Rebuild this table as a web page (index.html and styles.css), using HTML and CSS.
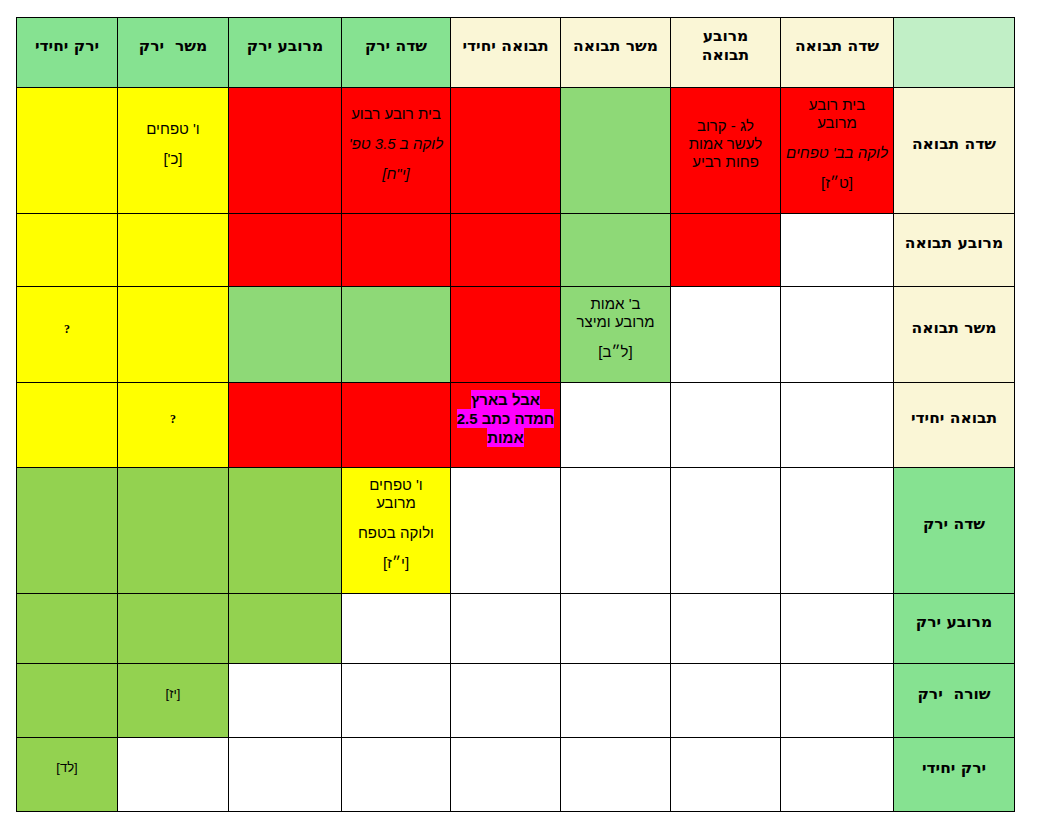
FILE: index.html
```html
<!DOCTYPE html>
<html lang="he">
<head>
<meta charset="utf-8">
<title>כלאים – טבלה</title>
<link rel="stylesheet" href="styles.css">
</head>
<body>
<table class="grid" dir="rtl">
  <colgroup>
    <col class="c-head"><col class="c1"><col class="c2"><col class="c3"><col class="c4"><col class="c5"><col class="c6"><col class="c7"><col class="c8">
  </colgroup>
  <thead>
    <tr class="r0">
      <th class="corner"></th>
      <th class="cream">שדה תבואה</th>
      <th class="cream">מרובע<br>תבואה</th>
      <th class="cream">משר תבואה</th>
      <th class="cream">תבואה יחידי</th>
      <th class="hgreen">שדה ירק</th>
      <th class="hgreen">מרובע ירק</th>
      <th class="hgreen">משר&nbsp; ירק</th>
      <th class="hgreen">ירק יחידי</th>
    </tr>
  </thead>
  <tbody>
    <tr class="r1">
      <th class="cream">שדה תבואה</th>
      <td class="red"><p>בית רובע<br>מרובע</p><p><i>לוקה בב' טפחים</i></p><p>[ט״ז]</p></td>
      <td class="red"><p>לג - קרוב<br>לעשר אמות<br>פחות רביע</p></td>
      <td class="lgreen"></td>
      <td class="red"></td>
      <td class="red"><p>בית רובע רבוע</p><p><i>לוקה ב 3.5 טפ'</i></p><p><i>[י"ח]</i></p></td>
      <td class="red"></td>
      <td class="yellow"><p>ו' טפחים</p><p>[כ']</p></td>
      <td class="yellow"></td>
    </tr>
    <tr class="r2">
      <th class="cream">מרובע תבואה</th>
      <td class="white"></td>
      <td class="red"></td>
      <td class="lgreen"></td>
      <td class="red"></td>
      <td class="red"></td>
      <td class="red"></td>
      <td class="yellow"></td>
      <td class="yellow"></td>
    </tr>
    <tr class="r3">
      <th class="cream">משר תבואה</th>
      <td class="white"></td>
      <td class="white"></td>
      <td class="lgreen"><p>ב' אמות<br>מרובע ומיצר</p><p>[ל״ב]</p></td>
      <td class="red"></td>
      <td class="lgreen"></td>
      <td class="lgreen"></td>
      <td class="yellow"></td>
      <td class="yellow"><span class="q">?</span></td>
    </tr>
    <tr class="r4">
      <th class="cream">תבואה יחידי</th>
      <td class="white"></td>
      <td class="white"></td>
      <td class="white"></td>
      <td class="red"><p class="note"><span class="mark">אבל בארץ</span><br><span class="mark">חמדה כתב 2.5</span><br><span class="mark">אמות</span></p></td>
      <td class="red"></td>
      <td class="red"></td>
      <td class="yellow"><span class="q">?</span></td>
      <td class="yellow"></td>
    </tr>
    <tr class="r5">
      <th class="hgreen">שדה ירק</th>
      <td class="white"></td>
      <td class="white"></td>
      <td class="white"></td>
      <td class="white"></td>
      <td class="yellow"><p>ו' טפחים<br>מרובע</p><p>ולוקה בטפח</p><p>[י״ז]</p></td>
      <td class="dgreen"></td>
      <td class="dgreen"></td>
      <td class="dgreen"></td>
    </tr>
    <tr class="r6">
      <th class="hgreen">מרובע ירק</th>
      <td class="white"></td>
      <td class="white"></td>
      <td class="white"></td>
      <td class="white"></td>
      <td class="white"></td>
      <td class="dgreen"></td>
      <td class="dgreen"></td>
      <td class="dgreen"></td>
    </tr>
    <tr class="r7">
      <th class="hgreen">שורה&nbsp; ירק</th>
      <td class="white"></td>
      <td class="white"></td>
      <td class="white"></td>
      <td class="white"></td>
      <td class="white"></td>
      <td class="white"></td>
      <td class="dgreen"><p class="small">[יז]</p></td>
      <td class="dgreen"></td>
    </tr>
    <tr class="r8">
      <th class="hgreen">ירק יחידי</th>
      <td class="white"></td>
      <td class="white"></td>
      <td class="white"></td>
      <td class="white"></td>
      <td class="white"></td>
      <td class="white"></td>
      <td class="white"></td>
      <td class="dgreen"><p class="small">[לד]</p></td>
    </tr>
  </tbody>
</table>
</body>
</html>
```

FILE: styles.css
```css
html, body {
  margin: 0;
  padding: 0;
  background: #ffffff;
}

body {
  padding: 17px 0 0 16px;
  font-family: "Liberation Sans", Arial, sans-serif;
  color: #000000;
}

.grid {
  border-collapse: collapse;
  table-layout: fixed;
  width: 999px;
}

.grid th,
.grid td {
  border: 1px solid #000000;
  padding: 0 2px 13px;
  text-align: center;
  vertical-align: middle;
  font-size: 15px;
  line-height: 18px;
  overflow: hidden;
}

.grid th {
  font-family: "DejaVu Sans", "Liberation Sans", sans-serif;
  font-weight: bold;
  font-size: 15.5px;
  line-height: 19px;
}

.grid p {
  margin: 0 0 12px;
}

.grid p:last-child {
  margin-bottom: 0;
}

.c-head { width: 121px; }
.c1 { width: 113px; }
.c2 { width: 110px; }
.c3 { width: 110px; }
.c4 { width: 110px; }
.c5 { width: 109px; }
.c6 { width: 113px; }
.c7 { width: 111px; }
.c8 { width: 101px; }

.r0 { height: 70px; }
.r1 { height: 126px; }
.r2 { height: 73px; }
.r3 { height: 96px; }
.r4 { height: 85px; }
.r5 { height: 126px; }
.r6 { height: 70px; }
.r7 { height: 74px; }
.r8 { height: 74px; }

.corner { background: #c1efc6; }
.cream { background: #faf6d6; }
.hgreen { background: #86e291; }
.red { background: #ff0000; }
.yellow { background: #ffff00; }
.lgreen { background: #8ed977; }
.dgreen { background: #93d250; }
.white { background: #ffffff; }

.q {
  font-family: "Liberation Serif", serif;
  font-size: 12px;
  font-weight: bold;
}

.small {
  font-size: 13px;
}

.note {
  line-height: 19px;
  font-weight: bold;
}

.mark {
  background: #ff00ff;
  padding: 1px 0;
}
```
